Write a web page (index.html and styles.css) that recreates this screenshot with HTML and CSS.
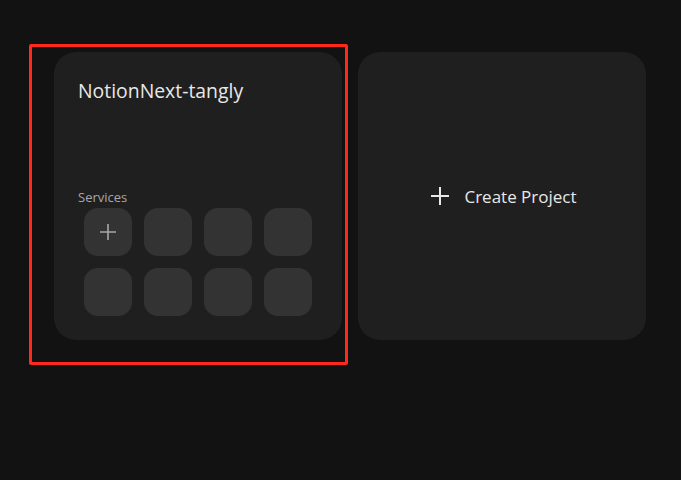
FILE: index.html
```html
<!DOCTYPE html>
<html lang="en">
<head>
    <meta charset="UTF-8">
    <title>Projects</title>
    <meta name="viewport" content="width=device-width, initial-scale=1.0">
    <link rel="stylesheet" href="styles.css">
</head>
<body>
    <div id="projects">
        <div class="project-slot">
            <div class="card project">
                <h2 class="project-name">NotionNext-tangly</h2>
                <div class="services">
                    <label class="services-label">Services</label>
                    <div class="service-grid">
                        <button class="service add-service">
                            <svg width="18" height="18" viewBox="0 0 18 18">
                                <path d="M9 1v16M1 9h16" stroke="#a8a8a8" stroke-width="1.6" fill="none"/>
                            </svg>
                        </button>
                        <div class="service"></div>
                        <div class="service"></div>
                        <div class="service"></div>
                        <div class="service"></div>
                        <div class="service"></div>
                        <div class="service"></div>
                        <div class="service"></div>
                    </div>
                </div>
            </div>
            <span class="selected-frame"></span>
        </div>
        <button class="card create-project">
            <svg width="18" height="18" viewBox="0 0 18 18">
                <path d="M9 0v18M0 9h18" stroke="#e8e8e8" stroke-width="2" fill="none"/>
            </svg>
            <span>Create Project</span>
        </button>
    </div>
</body>
</html>
```

FILE: styles.css
```css
body {
    font-family: "Open Sans", "Noto Sans", sans-serif;
    margin: 0;
    padding: 0;
    min-height: 100vh;
    background-color: #121212;
    color: #e6e6e6;
}
#projects {
    display: flex;
    gap: 16px;
    padding: 52px 0 40px 54px;
}
.project-slot {
    position: relative;
}
.card {
    width: 288px;
    height: 288px;
    box-sizing: border-box;
    background-color: #1f1f1f;
    border-radius: 22px;
}
.project {
    display: flex;
    flex-direction: column;
    justify-content: space-between;
    padding: 25px 24px 24px 24px;
}
.project-name {
    margin: 0;
    font-size: 19.4px;
    font-weight: normal;
    line-height: 28px;
    color: #e8e8e8;
}
.services-label {
    display: block;
    font-size: 13px;
    color: #a8a8a8;
    line-height: 22px;
}
.service-grid {
    display: grid;
    grid-template-columns: repeat(4, 48px);
    gap: 12px;
    padding-left: 6px;
}
.service {
    width: 48px;
    height: 48px;
    border-radius: 14px;
    background-color: #333;
}
.add-service {
    border: none;
    padding: 0;
    display: flex;
    align-items: center;
    justify-content: center;
    cursor: pointer;
}
.selected-frame {
    position: absolute;
    left: -25px;
    top: -8px;
    right: -6px;
    bottom: -25px;
    border: 3px solid #ff2a1c;
    border-radius: 2px;
    pointer-events: none;
}
.create-project {
    border: none;
    display: flex;
    align-items: center;
    justify-content: center;
    gap: 15px;
    padding: 0 0 0 4px;
    font-family: inherit;
    font-size: 17px;
    color: #e8e8e8;
    cursor: pointer;
}
```
